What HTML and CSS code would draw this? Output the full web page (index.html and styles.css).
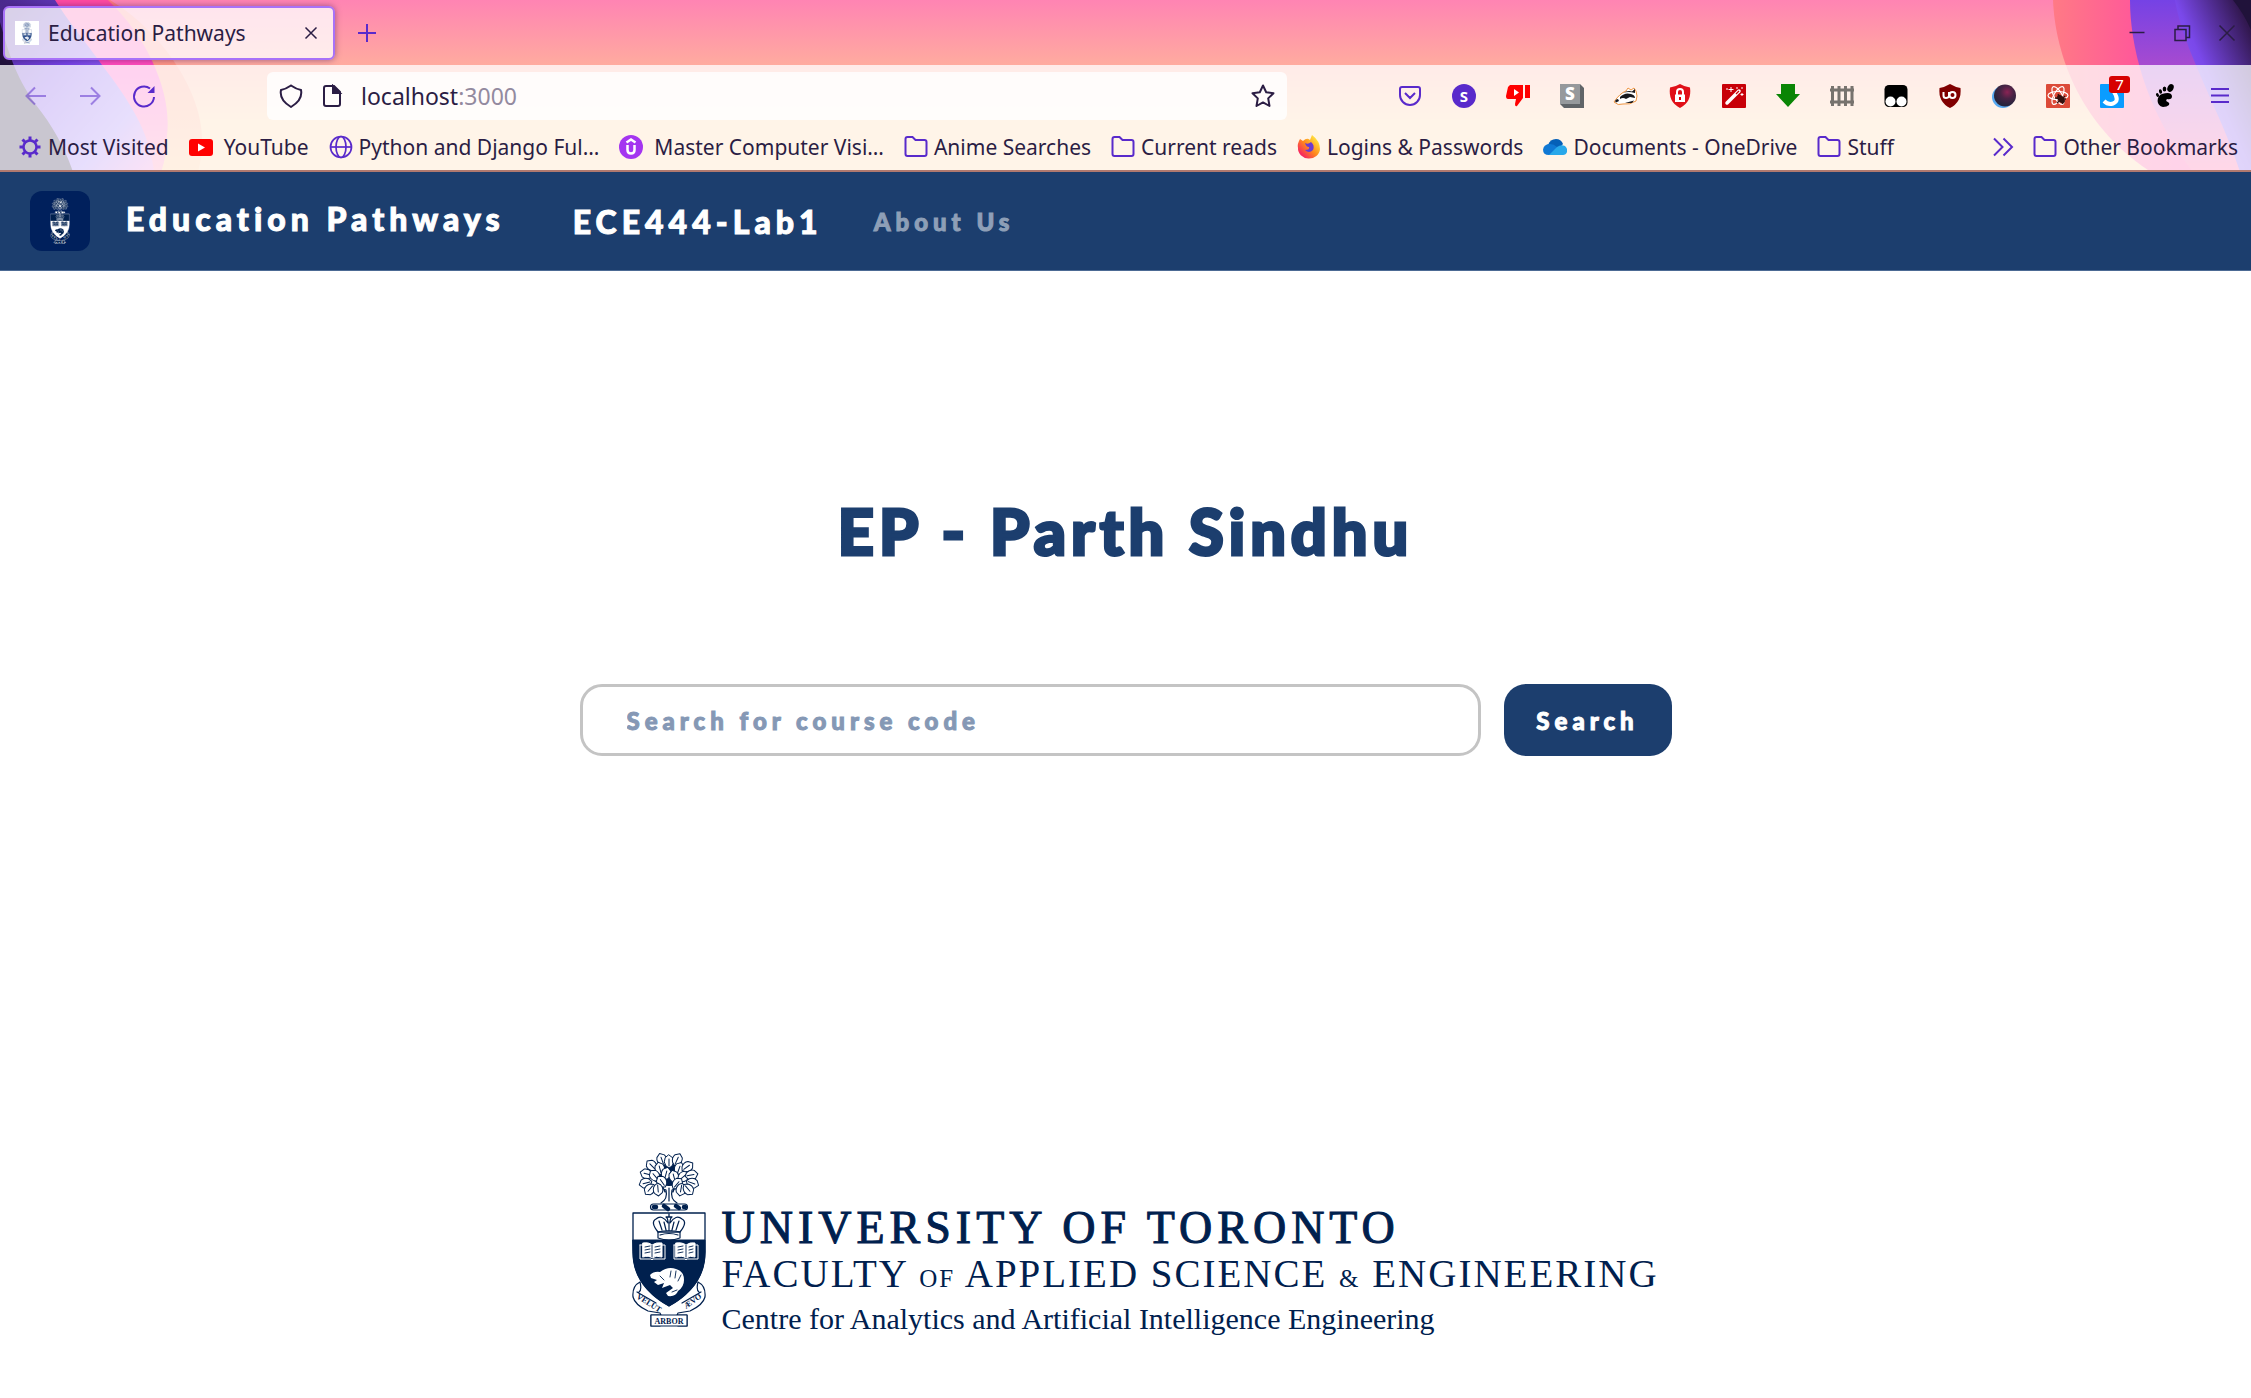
FILE: index.html
```html
<!DOCTYPE html>
<html lang="en">
<head>
<meta charset="utf-8">
<meta name="viewport" content="width=device-width, initial-scale=1">
<title>Education Pathways</title>
<link rel="stylesheet" href="styles.css">
</head>
<body>
<svg class="defs" aria-hidden="true">
  <defs>
    <symbol id="folder" viewBox="0 0 24 24"><path d="M1.500 19V4Q1.500 2 3.500 2H8.500L11.500 5H20.500Q22.500 5 22.500 7V19Q22.500 21 20.500 21H3.500Q1.500 21 1.500 19Z" fill="none" stroke="currentColor" stroke-width="2"/></symbol>
    <path id="leaf" d="M0-7L4-4Q6 0 3 4L0 6L-3 4Q-6 0-4-4ZM0-3V4"/>
    <symbol id="crest" viewBox="0 0 74 176">
      <g fill="none" stroke="currentColor" stroke-linejoin="round" stroke-linecap="round">
        <ellipse cx="37" cy="22" rx="18" ry="12" fill="currentColor" stroke="none"/>
        <path d="M29 51Q36 47 34 38L25 34M45 51Q38 47 40 38L51 34M37 49V36M33 40L30 33M41 40L44 32" stroke-width="1.200"/>
        <g class="paper" stroke-width="1">
          <use href="#leaf" transform="translate(30 8) rotate(-20)"/><use href="#leaf" transform="translate(37 10)"/><use href="#leaf" transform="translate(45 8) rotate(25)"/>
          <use href="#leaf" transform="translate(20 14) rotate(-45)"/><use href="#leaf" transform="translate(28 17) rotate(-15)"/><use href="#leaf" transform="translate(47 17) rotate(20)"/><use href="#leaf" transform="translate(55 15) rotate(55)"/>
          <use href="#leaf" transform="translate(15 22) rotate(-75)"/><use href="#leaf" transform="translate(23 24) rotate(-40)"/><use href="#leaf" transform="translate(34 22) rotate(15)"/><use href="#leaf" transform="translate(42 25) rotate(-15)"/><use href="#leaf" transform="translate(51 25) rotate(50)"/><use href="#leaf" transform="translate(59 23) rotate(80)"/>
          <use href="#leaf" transform="translate(14 31) rotate(-105)"/><use href="#leaf" transform="translate(30 30) rotate(-35)"/><use href="#leaf" transform="translate(45 32) rotate(40)"/><use href="#leaf" transform="translate(60 31) rotate(110)"/>
          <use href="#leaf" transform="translate(18 37) rotate(-140)"/><use href="#leaf" transform="translate(26 37) rotate(175)"/><use href="#leaf" transform="translate(49 37) rotate(190)"/><use href="#leaf" transform="translate(56 37) rotate(140)"/>
        </g>
        <rect class="paper" x="18.500" y="52" width="37" height="6" rx="3" stroke-width="1.200"/>
        <path d="M22 55H24M32 54L36 57M44 54L47 56M52 55H53" stroke-width="4.500"/>
        <path class="paper" d="M8 130Q0 134 1 145Q3 153 16 159L28 161Q31 165 28 174H19V163H28M8 130Q10 138 7 140M66 130Q74 134 73 145Q71 153 58 159L46 161Q43 165 46 174H55V163H46M66 130Q64 138 67 140M5 140L24 151M69 140L50 151" stroke-width="1.200"/>
        <path class="paper" d="M1 61H73V100Q73 134 37 154Q1 134 1 100Z" stroke-width="1.300"/>
        <path d="M1 88H73V100Q73 134 37 154Q1 134 1 100Z" fill="currentColor"/>
        <path class="paper" d="M26 80Q18 70 24 67Q30 62 36 71Q36 66 34 65H37V62V65H40Q38 66 38 71Q44 62 50 67Q56 70 48 80Z" stroke-width="1.300"/>
        <path d="M26 80Q37 77 48 80V86Q37 90 26 86ZM28 83Q37 80 46 83M27 69L30 78M47 69L44 78M37 70V78M32 70L34 78M42 70L40 78" stroke-width="1.200"/>
        <g class="books" stroke-width="1">
          <path d="M8 93V107H19L20 108L21 107H33V93H30M8 93H11"/>
          <path class="paperfill" d="M11 91Q17 90 20 93Q24 90 30 91V105Q24 103 20 106Q17 103 11 105Z"/>
          <path d="M42 93V107H53L54 108L55 107H66V93H63M42 93H45"/>
          <path class="paperfill" d="M44 91Q50 90 54 93Q58 90 63 91V105Q58 103 54 106Q50 103 44 105Z"/>
        </g>
        <path d="M20 93V105M54 93V105M13 95L18 94M13 98L18 97M13 101L18 100M23 95L28 94M23 98L28 97M23 101L28 100M46 95L51 94M46 98L51 97M46 101L51 100M57 95L61 94M57 98L61 97M57 101L61 100" stroke-width=".9"/>
        <path class="paperfill" stroke="none" d="M18 123Q22 119 28 120Q36 114 44 117Q52 119 52 128Q52 135 46 139Q44 145 36 144L34 141L41 136L38 133L30 136L32 131L26 133L22 130L25 128L19 126Z"/>
        <path d="M28 124L32 128M39 119L38 125M44 119L43 126M49 123L46 129M40 140L45 138" stroke-width=".9"/>
        <path class="paper" d="M19 163H55V174H19Z" stroke-width="1.100"/>
      </g>
      <g fill="currentColor" font-family="Liberation Serif, serif" font-weight="700" font-size="8">
        <text x="37" y="171.500" text-anchor="middle">ARBOR</text>
        <text transform="translate(4 146) rotate(32)">VELUT</text>
        <text transform="translate(54 157) rotate(-36)">ÆVO</text>
      </g>
    </symbol>
  </defs>
</svg>

<header class="browser">
  <svg class="theme theme-left" viewBox="0 0 260 172" aria-hidden="true">
    <defs>
      <linearGradient id="o1" x2="0" y2="1"><stop stop-color="#ff7a80"/><stop offset="1" stop-color="#ffc48c"/></linearGradient>
      <linearGradient id="p1" x2="0" y2="1"><stop stop-color="#ff4aa2"/><stop offset=".45" stop-color="#ff4ac0"/><stop offset="1" stop-color="#ff8cb0"/></linearGradient>
      <linearGradient id="v1" x2="1" y2="1"><stop stop-color="#4a2a8c"/><stop offset=".4" stop-color="#7542e5"/><stop offset=".75" stop-color="#9c78f4"/><stop offset="1" stop-color="#f088d8"/></linearGradient>
      <linearGradient id="p2" x2="1" y2="0"><stop stop-color="#ff7a85"/><stop offset=".6" stop-color="#ff4aa2"/></linearGradient>
      <linearGradient id="v2" x2="0" y2="1"><stop stop-color="#7542e5"/><stop offset=".45" stop-color="#b04ccc"/><stop offset="1" stop-color="#ff5a9c"/></linearGradient>
      <linearGradient id="v3" x1="1" y1="0" x2="0" y2="1"><stop offset=".1" stop-color="#321850"/><stop offset=".5" stop-color="#7a48ea"/><stop offset="1" stop-color="#9a72ff"/></linearGradient>
    </defs>
    <path fill="url(#o1)" d="M0 0H110C160 30 202 90 202 140Q202 158 198 172H0Z"/>
    <path fill="url(#p1)" d="M0 0H108C150 40 172 95 167 135Q166 160 161 172H0Z"/>
    <path fill="url(#v1)" d="M0 0H55C70 24 92 50 102 65C130 102 150 132 154 172H0Z"/>
    <path fill="#20123a" d="M0 22C8 50 14 74 36 105C52 125 65 148 73 172H0Z"/>
  </svg>
  <svg class="theme theme-right" viewBox="0 0 220 172" aria-hidden="true">
    <path fill="url(#p2)" d="M22 0C24 50 46 124 120 172H220V0Z"/>
    <path fill="url(#v2)" d="M99 0C99 45 114 110 162 172H220V0Z"/>
    <path fill="url(#v3)" d="M144 0C152 50 190 112 209 172H220V0Z"/>
    <path fill="#20123a" d="M202 0Q213 14 220 30V0Z"/>
  </svg>

  <div class="tabs">
    <div class="tab">
      <svg class="favicon" viewBox="0 0 24 24"><rect width="24" height="24" fill="#fff"/><use href="#crest" x="3" y="1" width="18" height="22"/></svg>
      <span class="tab-title">Education Pathways</span>
      <button class="icon-btn ink" aria-label="Close tab"><svg viewBox="0 0 24 24"><path d="M6.500 6.500L17.500 17.500M17.500 6.500L6.500 17.500"/></svg></button>
    </div>
    <button class="icon-btn violet" aria-label="New tab"><svg viewBox="0 0 24 24"><path d="M12 3V21M3 12H21"/></svg></button>
    <div class="window-controls">
      <button class="icon-btn ink" aria-label="Minimize"><svg viewBox="0 0 24 24"><path d="M4.500 11.500H19.500"/></svg></button>
      <button class="icon-btn ink" aria-label="Restore"><svg viewBox="0 0 24 24"><path d="M5 8.500H16V19.500H5ZM8 8V5H19.500V16.500H16"/></svg></button>
      <button class="icon-btn ink" aria-label="Close"><svg viewBox="0 0 24 24"><path d="M4.500 4.500L19.500 19.500M19.500 4.500L4.500 19.500"/></svg></button>
    </div>
  </div>

  <div class="panel">
    <div class="toolbar">
      <div class="tools">
        <button class="icon-btn violet faded" aria-label="Back"><svg viewBox="0 0 24 24"><path d="M22 12H2.500M11 3.500L2.500 12L11 20.500"/></svg></button>
        <button class="icon-btn violet faded" aria-label="Forward"><svg viewBox="0 0 24 24"><path d="M2 12H21.500M13 3.500L21.500 12L13 20.500"/></svg></button>
        <button class="icon-btn violet" aria-label="Reload"><svg viewBox="0 0 24 24"><path d="M22 13A10 10 0 1 1 18 4.500"/><path d="M22.500 2V9H15.500Z" fill="currentColor" stroke="none"/></svg></button>
      </div>
      <div class="urlbar">
        <svg class="icon" viewBox="0 0 24 24"><path d="M12 1.500Q17 5 22 6Q24 16 12 23Q0 16 2 6Q7 5 12 1.500Z"/></svg>
        <svg class="icon" viewBox="0 0 24 24"><path d="M14 2H6Q4 2 4 4V20Q4 22 6 22H18Q20 22 20 20V8Z"/><path d="M13 2L20 9H13Z" fill="currentColor"/></svg>
        <div class="url" role="textbox" aria-label="Address" tabindex="0">localhost<span class="port">:3000</span></div>
        <button class="icon-btn ink" aria-label="Bookmark this page"><svg viewBox="0 0 24 24"><path d="M12 1.500L15.200 8.200L22.500 9.200L17.200 14.400L18.500 22L12 18.400L5.500 22L6.800 14.400L1.500 9.200L8.800 8.200Z" stroke-width="2" stroke-linejoin="round"/></svg></button>
      </div>
      <div class="extensions">
        <button class="icon-btn violet" aria-label="Pocket"><svg viewBox="0 0 24 24"><path d="M4 3H20Q22 3 22 5V11A10 10 0 0 1 2 11V5Q2 3 4 3ZM7 9L12 14L17 9"/></svg></button>
        <button class="icon-btn" aria-label="Stylus"><svg viewBox="0 0 24 24"><circle cx="12" cy="12" r="12" fill="#592acb"/><text x="12" y="17.500" class="glyph" font-size="15">S</text></svg></button>
        <button class="icon-btn" aria-label="Dislike counter"><svg viewBox="0 0 24 24"><path fill="#f00" d="M4 1H17V14L11 22Q9 23 9 20L10 15H2Q0 15 0 12L2 3ZM19 1H24V14H19Z"/><path d="M8 5V12L13 8.500Z" fill="#fff"/></svg></button>
        <button class="icon-btn" aria-label="Stylish"><svg viewBox="0 0 24 24"><path d="M0 0H20L24 4V24H4L0 20Z" fill="#606468"/><path d="M0 0H20V20H0Z" fill="#96999c"/><text x="10" y="16" class="glyph heavy" font-size="17">S</text></svg></button>
        <button class="icon-btn" aria-label="Privacy Badger"><svg viewBox="0 0 24 24"><path d="M0 18Q6 9 12 7L14 4L17 6L20 4L22 7Q24 12 22 17Q16 21 9 20Q4 22 0 18Z" fill="#fff" stroke="#ee9440" stroke-width="1"/><path d="M1 17Q2 15 4 15L5 17L2 18.500ZM6 13Q11 8 17 10Q21 11 21 14L16 13L12 15Q9 13 6 15ZM9 9Q14 6 18 7.500L21 5L21 9Q14 7 9 9ZM11 19L20 16.500L18 19ZM4 19.500L9 18.500" fill="#17171c"/></svg></button>
        <button class="icon-btn" aria-label="Ad blocker"><svg viewBox="0 0 24 24"><path d="M12 0Q17 3 22 3.500Q24 18 12 24Q0 18 2 3.500Q7 3 12 0Z" fill="#e01018"/><path d="M7 10.500H17V18H7Z" fill="#fff"/><path d="M9 11V8A3 3 0 0 1 15 8V11" fill="none" stroke="#fff" stroke-width="2"/><path d="M12 13V16" stroke="#d00" stroke-width="2"/></svg></button>
        <button class="icon-btn" aria-label="Magic wand"><svg viewBox="0 0 24 24"><rect width="24" height="24" rx="1" fill="#c80008"/><path d="M5 19L17 7" stroke="#fff" stroke-width="3.500" stroke-linecap="round"/><path d="M14 10L17 7" stroke="#c80008" stroke-width="1.300"/><path d="M9 3V8M6.500 5.500H11.500M20 9V12M18.500 10.500H21.500M4 5H6M15 3V5M20 3V5" stroke="#fff"/></svg></button>
        <button class="icon-btn" aria-label="Downloader"><svg viewBox="0 0 24 24"><path d="M5 0H19V10H24L12 23L0 10H5Z" fill="#0a8505"/></svg></button>
        <button class="icon-btn" aria-label="Fence"><svg viewBox="0 0 24 24"><path d="M2.500 2V22M9 2V22M15.500 2V22M22 2V22M0 6H24M0 18H24" stroke="#77736e" stroke-width="3" fill="none"/></svg></button>
        <button class="icon-btn" aria-label="Tampermonkey"><svg viewBox="0 0 24 24"><rect x=".5" y="1" width="23" height="22" rx="4.500"/><circle cx="6.500" cy="17.500" r="5" fill="#fff"/><circle cx="17.500" cy="17.500" r="5" fill="#fff"/></svg></button>
        <button class="icon-btn" aria-label="uBlock Origin"><svg viewBox="0 0 24 24"><path d="M12 0Q17 3 22.500 4Q24 18 12 24Q0 18 1.500 4Q7 3 12 0Z" fill="#800000"/><path d="M5.500 8V11.500Q5.500 14 8 14T11 12V8" fill="none" stroke="#fff" stroke-width="2"/><circle cx="14.500" cy="11" r="3" fill="none" stroke="#fff" stroke-width="2"/></svg></button>
        <button class="icon-btn" aria-label="Dark mode"><svg viewBox="0 0 24 24"><defs><radialGradient id="orb" cx=".6" cy=".35" r=".6"><stop stop-color="#8a2354"/><stop offset=".5" stop-color="#482344"/><stop offset="1" stop-color="#28243c"/></radialGradient></defs><circle cx="11" cy="13" r="11" fill="#58a8f0"/><circle cx="13" cy="11.500" r="11" fill="url(#orb)"/></svg></button>
        <button class="icon-btn" aria-label="React developer tools"><svg viewBox="0 0 24 24"><rect width="24" height="24" rx="1" fill="#dc4a38"/><g fill="none" stroke="#fff" stroke-width="1.200"><ellipse cx="12" cy="11.500" rx="10" ry="4"/><ellipse cx="12" cy="11.500" rx="10" ry="4" transform="rotate(60 12 11.500)"/><ellipse cx="12" cy="11.500" rx="10" ry="4" transform="rotate(120 12 11.500)"/></g><ellipse cx="15" cy="15" rx="3" ry="5" transform="rotate(-40 15 15)" fill="#331210"/><path d="M9 14L20 15M11 19L19 12M12 10L17 20" stroke="#331210" stroke-width="1.300"/></svg></button>
        <button class="icon-btn badged" aria-label="Notes, 7 new"><svg viewBox="0 0 24 24"><rect width="24" height="24" rx="1" fill="#0a9cff"/><path d="M14 8Q20 17 13 19.500Q8 21 4 17" fill="none" stroke="#fff" stroke-width="4"/></svg><span class="badge">7</span></button>
        <button class="icon-btn" aria-label="GNOME integration"><svg viewBox="0 0 24 24"><path d="M9 23C2 22 2 12 8 10Q17 7 18 12Q18 16 13 15Q11 17 14 18Q16 19 15 21Q13 23 9 23Z"/><ellipse cx="16.500" cy="4" rx="3" ry="4" transform="rotate(25 16.500 4)"/><ellipse cx="10.500" cy="5" rx="1.800" ry="2.500"/><ellipse cx="6.500" cy="7.500" rx="1.500" ry="2.200" transform="rotate(-15 6.500 7.500)"/><ellipse cx="3.500" cy="11" rx="1.300" ry="2" transform="rotate(-30 3.500 11)"/></svg></button>
        <button class="icon-btn violet" aria-label="Menu"><svg viewBox="0 0 24 24"><path d="M3 5H21M3 11.500H21M3 18H21"/></svg></button>
      </div>
    </div>

    <nav class="bookmarks" aria-label="Bookmarks">
      <a href="#"><svg class="violet" viewBox="0 0 24 24"><circle cx="12" cy="12" r="6.500" fill="none" stroke="currentColor" stroke-width="2.500"/><path d="M12 1.500V5M12 19V22.500M1.500 12H5M19 12H22.500M4.500 4.500L7 7M17 17L19.500 19.500M19.500 4.500L17 7M7 17L4.500 19.500" stroke="currentColor" stroke-width="3"/></svg>Most Visited</a>
      <a href="#" class="wide"><svg viewBox="0 0 24 24"><rect y="4" width="24" height="17" rx="3" fill="#f00"/><path d="M9 8.500L16 12.500L9 16.500Z" fill="#fff"/></svg>YouTube</a>
      <a href="#"><svg class="violet" viewBox="0 0 24 24"><g fill="none" stroke="currentColor" stroke-width="1.700"><circle cx="12" cy="12" r="10.500"/><ellipse cx="12" cy="12" rx="5" ry="10.500"/><path d="M1.500 12H22.500"/></g></svg>Python and Django Ful…</a>
      <a href="#" class="wide"><svg viewBox="0 0 24 24"><circle cx="12" cy="12" r="12" fill="#a435f0"/><path d="M7.500 7.500L12 4.500L16.500 7.500M8.500 10V15Q8.500 18.500 12 18.500T15.500 15V10" fill="none" stroke="#fff" stroke-width="2.500"/></svg>Master Computer Visi…</a>
      <a href="#"><svg class="violet"><use href="#folder"/></svg>Anime Searches</a>
      <a href="#"><svg class="violet"><use href="#folder"/></svg>Current reads</a>
      <a href="#"><svg viewBox="0 0 24 24"><defs><linearGradient id="fx" x1="1" x2="0" y2="1"><stop offset=".1" stop-color="#fff044"/><stop offset=".5" stop-color="#ff8a1c"/><stop offset=".9" stop-color="#f5156c"/></linearGradient></defs><path d="M15 0Q23 6 23 14A11 10 0 0 1 1 13Q0 9 3 4L6 6Q10 2 13 5Z" fill="url(#fx)"/><path d="M8 8Q11 10 14 7Q18 10 16 15Q12 19 8 15Q13 15 12 12Q9 12 8 8Z" fill="#6b3ad0"/></svg>Logins &amp; Passwords</a>
      <a href="#"><svg viewBox="0 0 24 24"><path d="M5 10Q7 4 13 4Q18 4 20 9L14 16Z" fill="#0560b8"/><path d="M6 20Q0 20 0 14.500Q1 9 7 9Q11 9 14 12L10 20Z" fill="#0f78d4"/><path d="M6 20L14 12Q18 9 22 11Q25 14 24 17Q23 20 20 20Z" fill="#28a8ea"/></svg>Documents - OneDrive</a>
      <a href="#"><svg class="violet"><use href="#folder"/></svg>Stuff</a>
      <span class="bookmarks-end">
        <button class="icon-btn violet" aria-label="More bookmarks"><svg viewBox="0 0 24 24"><path d="M3 3.500L11.500 12L3 20.500M12.500 3.500L21 12L12.500 20.500"/></svg></button>
        <a href="#"><svg class="violet"><use href="#folder"/></svg>Other Bookmarks</a>
      </span>
    </nav>
  </div>
</header>

<nav class="navbar">
  <a href="#" class="logo" aria-label="Home"><svg viewBox="0 0 74 176"><use href="#crest"/></svg></a>
  <a href="#" class="brand">Education Pathways</a>
  <a href="#" class="lab">ECE444-Lab1</a>
  <a href="#" class="about">About Us</a>
</nav>

<main>
  <h1>EP - Parth Sindhu</h1>
  <form class="search">
    <input type="text" placeholder="Search for course code" aria-label="Course code">
    <button type="button">Search</button>
  </form>
</main>

<footer class="faculty">
  <svg class="faculty-crest" viewBox="0 0 74 176"><use href="#crest"/></svg>
  <div class="faculty-name">
    <p class="university">UNIVERSITY OF TORONTO</p>
    <p class="division">FACULTY <small>OF</small> APPLIED SCIENCE <small>&amp;</small> ENGINEERING</p>
    <p class="centre">Centre for Analytics and Artificial Intelligence Engineering</p>
  </div>
</footer>
</body>
</html>
```
FILE: styles.css
```css
:root {
  --navy: #1c3e6e;
  --crest: #00204e;
  --violet: #592acb;
  --ink: #2b1d44;
  --paper: #fff;
}
* { box-sizing: border-box; }
body {
  margin: 0;
  background: #fff;
  font-family: Lato, sans-serif;
}
a { color: inherit; text-decoration: none; }
button { font: inherit; border: 0; background: none; padding: 0; margin: 0; }
.defs { position: absolute; width: 0; height: 0; }
.paper, .paperfill { fill: var(--paper); }
.books { stroke: var(--paper); }
.violet { color: var(--violet); }
.ink { color: var(--ink); }

/* browser window */
.browser {
  position: relative;
  overflow: hidden;
  background: linear-gradient(#ff84b3, #ffab9f 65px, #ffcfa0 120px);
  border-bottom: 2px solid #b0796f;
  font-family: "Noto Sans", sans-serif;
  font-size: 21px;
  line-height: 30px;
  color: var(--ink);
}
.theme { position: absolute; top: 0; height: 172px; }
.theme-left { left: 0; width: 260px; }
.theme-right { right: 0; width: 220px; }
.tabs, .panel { position: relative; }
.tabs {
  display: flex;
  align-items: center;
  height: 65px;
  padding: 0 12px 0 3px;
}
.tab {
  display: flex;
  align-items: center;
  gap: 9px;
  width: 332px;
  height: 54px;
  margin-right: 20px;
  padding: 0 10px;
  border: 2px solid #a872f8;
  border-radius: 6px;
  background: rgba(255, 255, 255, .78);
  box-shadow: 0 0 6px rgba(60, 20, 90, .5);
}
.favicon { width: 24px; height: 24px; flex: none; color: #31528c; }
.tab-title { flex: 1; white-space: nowrap; }
.icon-btn { display: block; width: 24px; height: 24px; flex: none; }
.icon-btn svg { display: block; width: 24px; height: 24px; overflow: visible; }
.violet svg, .ink svg, .icon { fill: none; stroke: currentColor; stroke-width: 2; }
.tabs .ink svg { stroke-width: 1.5; }
.faded { opacity: .5; }
.window-controls { display: flex; gap: 21px; margin-left: auto; }
.panel { background: rgba(255, 255, 255, .76); }
.toolbar { display: flex; align-items: center; height: 61px; padding: 0 19px 0 24px; }
.tools, .extensions { display: flex; gap: 30px; }
.urlbar {
  display: flex;
  flex: 1;
  align-items: center;
  gap: 17px;
  height: 48px;
  margin: 0 111px;
  padding: 0 12px;
  border-radius: 6px;
  background: rgba(255, 255, 255, .8);
  font-size: 23px;
}
.icon { width: 24px; height: 24px; flex: none; }
.url { flex: 1; }
.port { color: #938a9f; }
.glyph { fill: #fff; font-family: "Open Sans", sans-serif; font-weight: 700; text-anchor: middle; }
.heavy { font-weight: 800; }
.badged { position: relative; }
.badge {
  position: absolute;
  left: 9px;
  top: -8px;
  width: 21px;
  height: 17px;
  border-radius: 3px;
  background: #d70000;
  color: #fff;
  font-size: 15px;
  line-height: 17px;
}
.bookmarks {
  display: flex;
  align-items: center;
  gap: 20px;
  height: 44px;
  padding: 0 13px 2px 18px;
  white-space: nowrap;
}
.bookmarks a { display: flex; align-items: center; gap: 6px; }
.bookmarks .wide { gap: 11px; }
.bookmarks svg { width: 24px; height: 24px; flex: none; }
.bookmarks-end { display: flex; align-items: center; gap: 18px; margin-left: auto; }

/* site */
.navbar {
  display: flex;
  align-items: center;
  height: 99px;
  padding-left: 30px;
  background: var(--navy);
  border-bottom: 1px solid #4c6a94;
  color: #fff;
  font-size: 32px;
  font-weight: 900;
  letter-spacing: 5px;
  -webkit-text-stroke: 1px;
}
.logo {
  --paper: #00204e;
  display: flex;
  justify-content: center;
  align-items: center;
  width: 60px;
  height: 60px;
  margin-right: 36px;
  border-radius: 12px;
  background: #00205c;
  -webkit-text-stroke: 0;
}
.logo svg { height: 46px; width: 20px; }
.brand { padding-bottom: 6px; margin-right: 68px; }
.lab { margin-right: 51px; }
.about { font-size: 24px; color: #8e9fb7; }
main { padding: 216px 24px 0; color: var(--navy); }
h1 {
  margin: 0 0 109px;
  text-align: center;
  font-size: 63px;
  line-height: 88px;
  font-weight: 900;
  letter-spacing: 5px;
  -webkit-text-stroke: 3px;
}
.search { display: flex; gap: 23px; max-width: 1092px; margin: 0 auto; }
.search input, .search button {
  height: 72px;
  border-radius: 22px;
  font: 900 24px Lato, sans-serif;
  letter-spacing: 5px;
  -webkit-text-stroke: 1px;
}
.search input {
  flex: 1;
  min-width: 0;
  padding: 0 44px;
  border: 3px solid #c4c4c4;
  background: #fff;
  color: var(--navy);
}
.search input::placeholder { color: #8598b5; opacity: 1; }
.search button { width: 168px; background: var(--navy); color: #fff; }
.faculty {
  display: flex;
  gap: 16px;
  max-width: 1092px;
  margin: 396px auto 40px;
  padding-left: 52px;
  color: var(--crest);
  font-family: "Liberation Serif", serif;
}
.faculty-crest { width: 74px; height: 176px; flex: none; }
.faculty-name { padding-top: 51px; white-space: nowrap; }
.faculty p { margin: 0; }
.university { font-size: 46px; line-height: 50px; letter-spacing: 5px; -webkit-text-stroke: 1px; }
.division { font-size: 39px; line-height: 42px; letter-spacing: 2px; }
.division small { font-size: 25px; }
.centre { font-size: 30px; line-height: 38px; }
```
